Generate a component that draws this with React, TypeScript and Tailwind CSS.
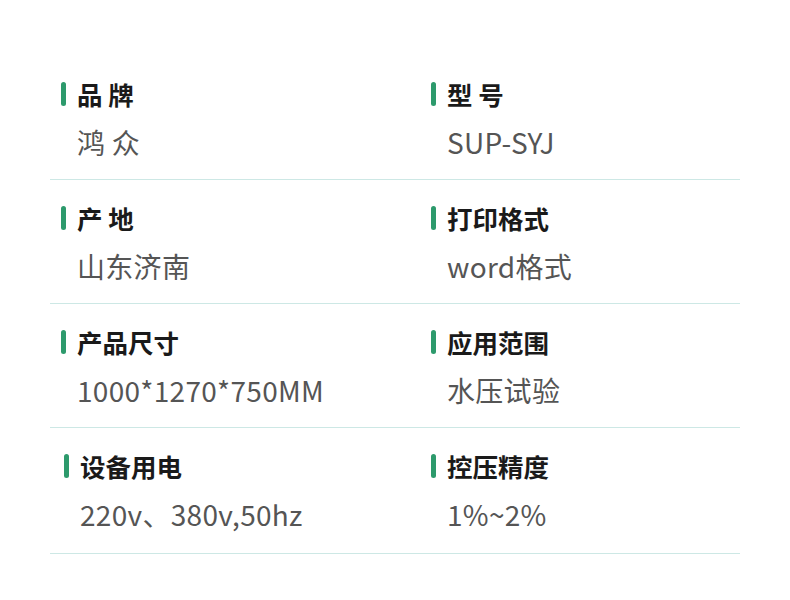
const specs: { label: string; value: string }[][] = [
  [
    { label: '品 牌', value: '鸿 众' },
    { label: '型 号', value: 'SUP-SYJ' },
  ],
  [
    { label: '产 地', value: '山东济南' },
    { label: '打印格式', value: 'word格式' },
  ],
  [
    { label: '产品尺寸', value: '1000*1270*750MM' },
    { label: '应用范围', value: '水压试验' },
  ],
  [
    { label: '设备用电', value: '220v、380v,50hz' },
    { label: '控压精度', value: '1%~2%' },
  ],
]

function Spec({ label, value, shift }: { label: string; value: string; shift?: boolean }) {
  return (
    <div className={shift ? 'pl-[14px]' : 'pl-[11px]'}>
      <div className="flex items-center gap-[11px]">
        <span className="h-[24px] w-[5px] rounded-full bg-[#2d9a6c]" />
        <span className="text-[25.5px] font-bold leading-[32px] text-[#1a1a1a]">{label}</span>
      </div>
      <div className="mt-[14px] pl-[16px] text-[28px] leading-[36px] tracking-[0.3px] text-[#555555]">
        {value}
      </div>
    </div>
  )
}

export default function App() {
  return (
    <div
      className="h-[600px] w-[790px] bg-white px-[50px] pt-[56px]"
      style={{ fontFamily: '"Noto Sans CJK SC", "Noto Sans", sans-serif' }}
    >
      {specs.map((row, i) => (
        <div
          key={i}
          className={
            i === 3
              ? 'grid h-[126px] grid-cols-[370px_1fr] border-b border-[#cde8e5] pt-[22px]'
              : 'grid h-[124px] grid-cols-[370px_1fr] border-b border-[#cde8e5] pt-[22px]'
          }
        >
          <Spec label={row[0].label} value={row[0].value} shift={i === 3} />
          <Spec label={row[1].label} value={row[1].value} />
        </div>
      ))}
    </div>
  )
}
